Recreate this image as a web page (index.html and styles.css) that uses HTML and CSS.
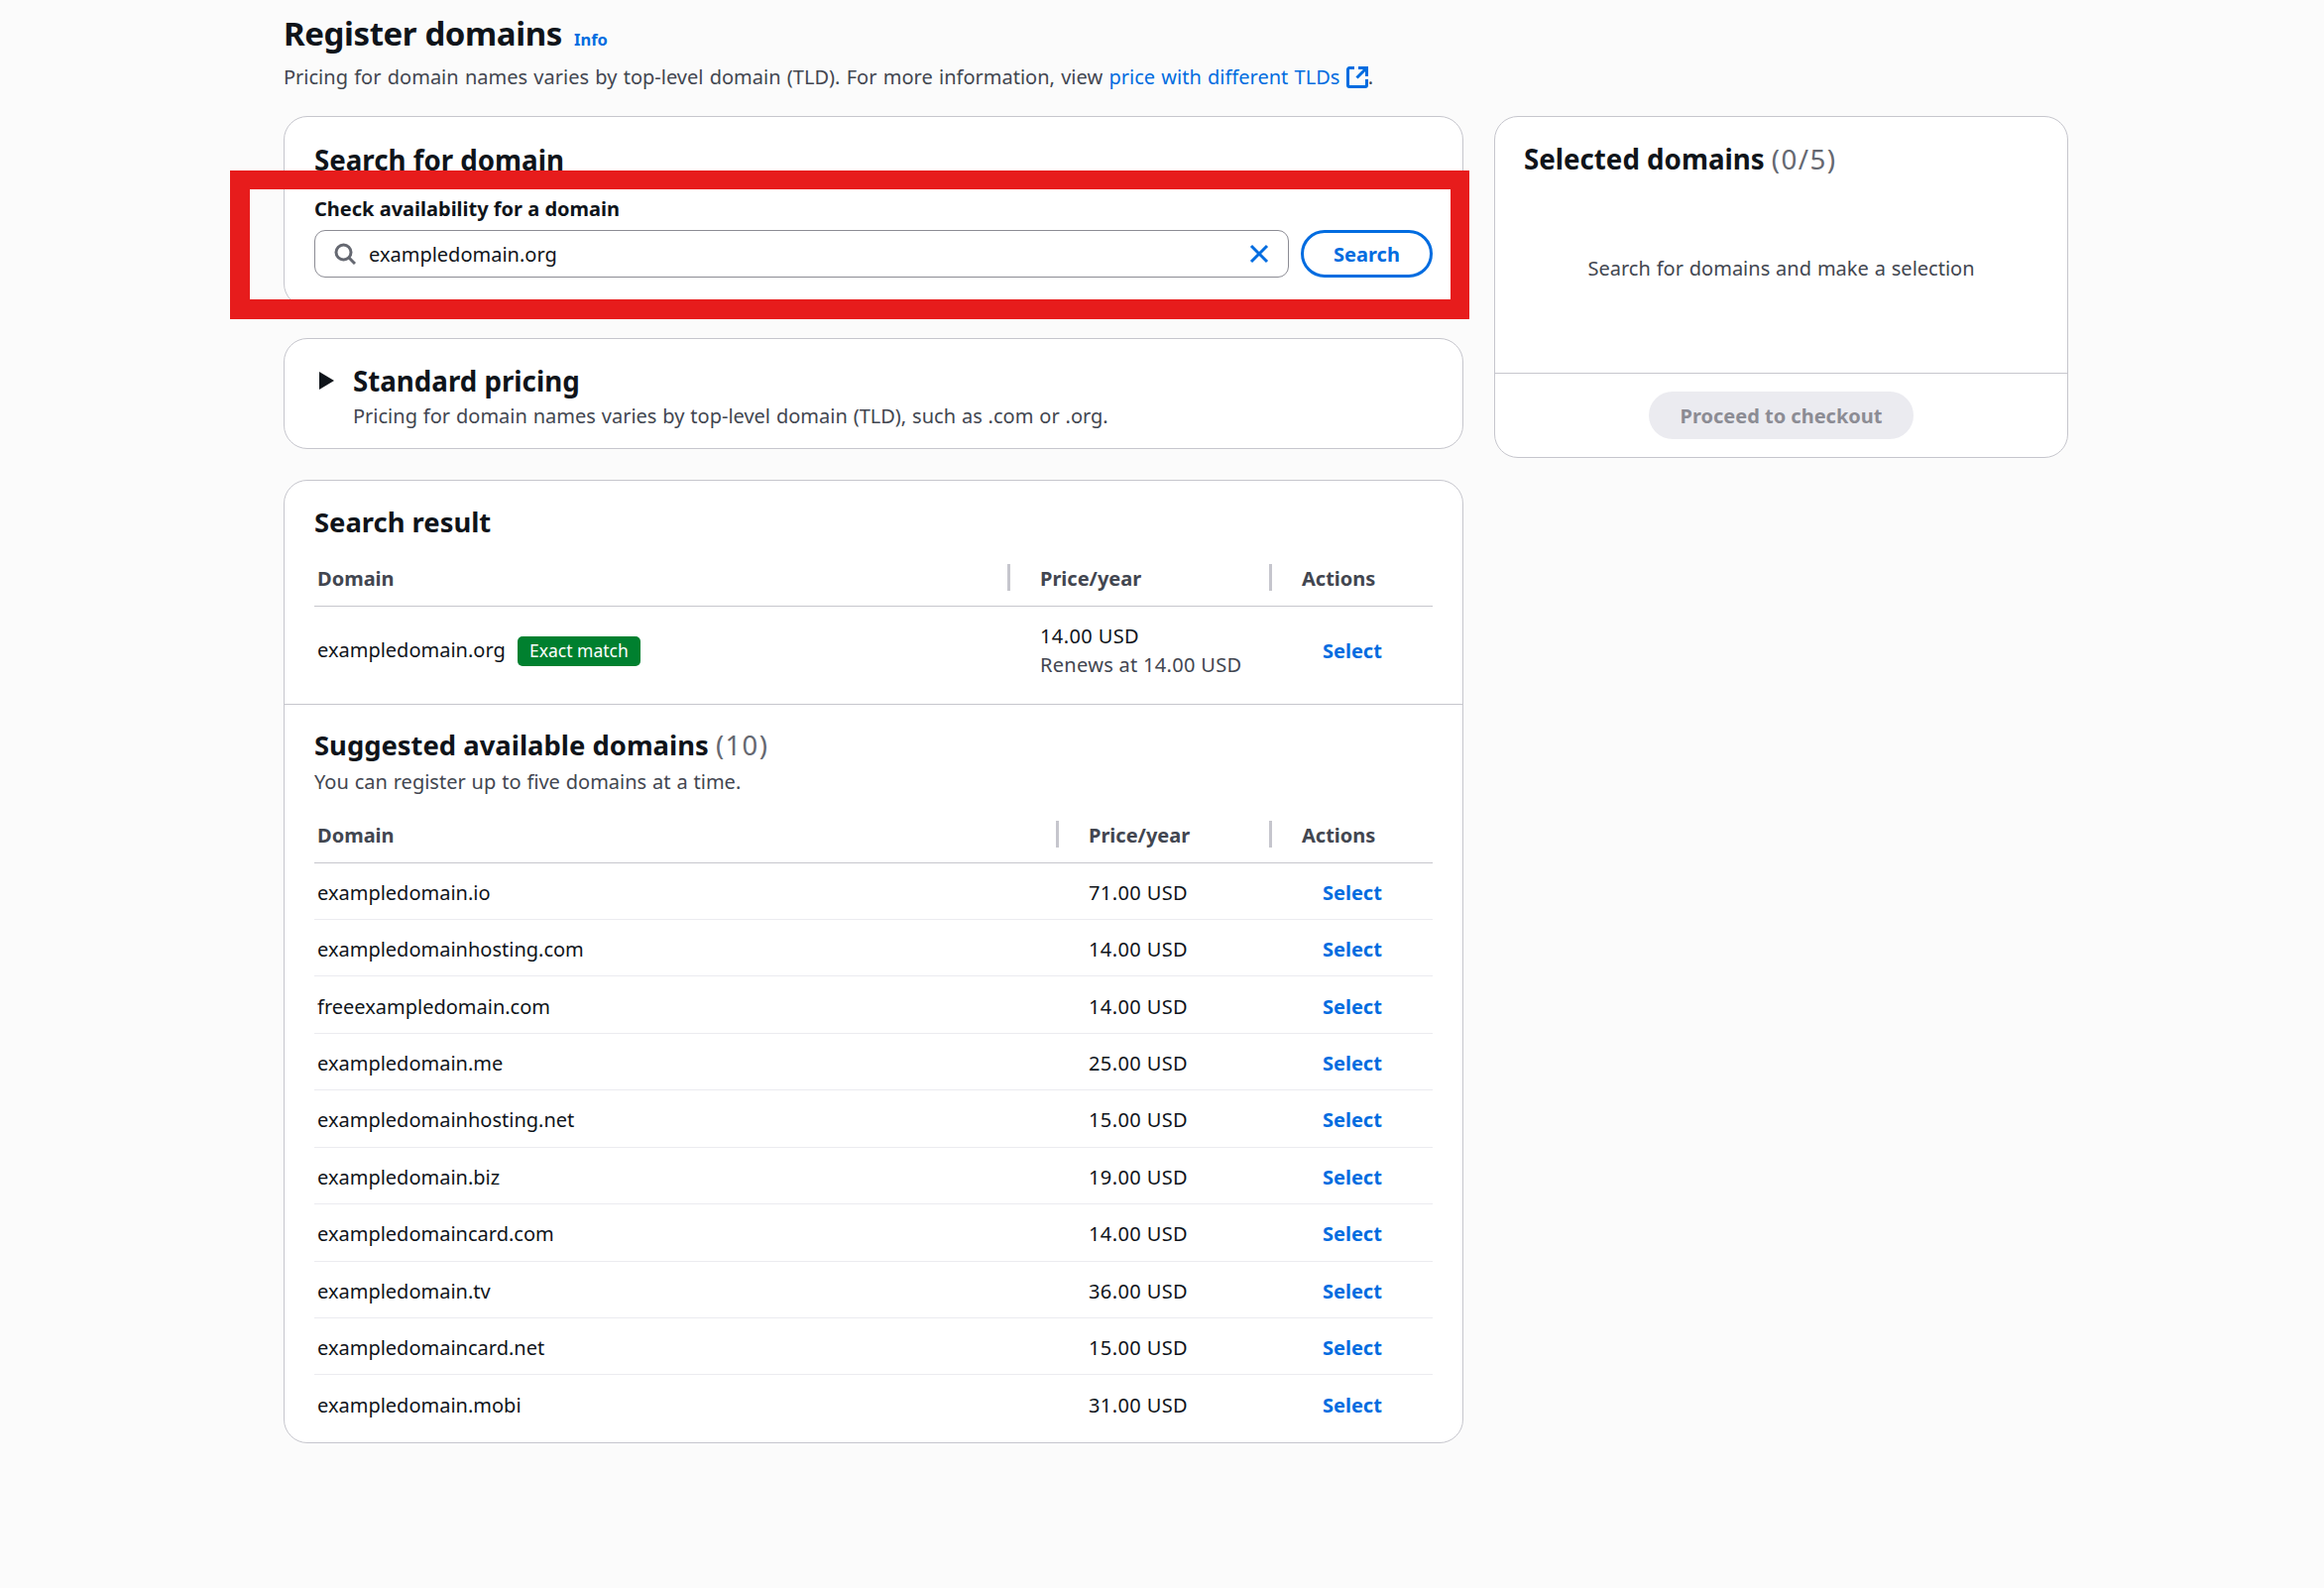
FILE: index.html
```html
<!DOCTYPE html>
<html lang="en">
<head>
  <meta charset="UTF-8">
  <title>Register domains</title>
  <link rel="stylesheet" href="styles.css">
</head>
<body>
  <div class="page">
    <header class="page-header">
      <h1>Register domains <a class="info-link" href="#">Info</a></h1>
      <p>Pricing for domain names varies by top-level domain (TLD). For more information, view <a href="#">price with different TLDs <svg class="external-icon" viewBox="0 0 22 22" width="22" height="22"><path d="M8 1.500H3A1.500 1.500 0 0 0 1.500 3v16A1.500 1.500 0 0 0 3 20.500h16a1.500 1.500 0 0 0 1.500-1.500v-6" /><path d="M12 1.500h8.500V10M20 2l-9.500 9.500" /></svg></a>.</p>
    </header>

    <div class="layout">
      <div class="main-column">
        <section class="card search-card">
          <h2>Search for domain</h2>
          <label class="field-label" for="domainInput">Check availability for a domain</label>
          <div class="search-row">
            <div class="search-input">
              <svg class="search-icon" viewBox="0 0 22 22" width="22" height="22"><circle cx="9.500" cy="9.500" r="7.500" /><path d="M15 15l6 6" /></svg>
              <input id="domainInput" type="text" value="exampledomain.org">
              <svg class="clear-icon" viewBox="0 0 20 20" width="20" height="20"><path d="M2 2l16 16M18 2L2 18" /></svg>
            </div>
            <button class="search-button">Search</button>
          </div>
        </section>

        <section class="card pricing-card">
          <span class="caret"></span>
          <div>
            <h2>Standard pricing</h2>
            <p>Pricing for domain names varies by top-level domain (TLD), such as .com or .org.</p>
          </div>
        </section>

        <section class="card results-card">
          <div class="result-block">
            <h2>Search result</h2>
            <table class="result-table">
              <thead>
                <tr><th>Domain</th><th>Price/year</th><th>Actions</th></tr>
              </thead>
              <tbody>
                <tr>
                  <td>exampledomain.org <span class="badge">Exact match</span></td>
                  <td class="price">14.00 USD<div class="renews">Renews at 14.00 USD</div></td>
                  <td><a class="select-link" href="#">Select</a></td>
                </tr>
              </tbody>
            </table>
          </div>

          <div class="suggest-block">
            <h2>Suggested available domains <span class="count">(10)</span></h2>
            <p>You can register up to five domains at a time.</p>
            <table class="suggest-table">
              <thead>
                <tr><th>Domain</th><th>Price/year</th><th>Actions</th></tr>
              </thead>
              <tbody>
                <tr><td>exampledomain.io</td><td class="price">71.00 USD</td><td><a class="select-link" href="#">Select</a></td></tr>
                <tr><td>exampledomainhosting.com</td><td class="price">14.00 USD</td><td><a class="select-link" href="#">Select</a></td></tr>
                <tr><td>freeexampledomain.com</td><td class="price">14.00 USD</td><td><a class="select-link" href="#">Select</a></td></tr>
                <tr><td>exampledomain.me</td><td class="price">25.00 USD</td><td><a class="select-link" href="#">Select</a></td></tr>
                <tr><td>exampledomainhosting.net</td><td class="price">15.00 USD</td><td><a class="select-link" href="#">Select</a></td></tr>
                <tr><td>exampledomain.biz</td><td class="price">19.00 USD</td><td><a class="select-link" href="#">Select</a></td></tr>
                <tr><td>exampledomaincard.com</td><td class="price">14.00 USD</td><td><a class="select-link" href="#">Select</a></td></tr>
                <tr><td>exampledomain.tv</td><td class="price">36.00 USD</td><td><a class="select-link" href="#">Select</a></td></tr>
                <tr><td>exampledomaincard.net</td><td class="price">15.00 USD</td><td><a class="select-link" href="#">Select</a></td></tr>
                <tr><td>exampledomain.mobi</td><td class="price">31.00 USD</td><td><a class="select-link" href="#">Select</a></td></tr>
              </tbody>
            </table>
          </div>
        </section>
      </div>

      <aside class="card selected-card">
        <h2>Selected domains <span class="count">(0/5)</span></h2>
        <div class="selected-empty">Search for domains and make a selection</div>
        <div class="selected-footer">
          <button class="checkout-button" disabled>Proceed to checkout</button>
        </div>
      </aside>
    </div>

    <div class="highlight-box"></div>
  </div>
</body>
</html>
```

FILE: styles.css
```css
* {
  box-sizing: border-box;
}

body {
  margin: 0;
  background-color: #fbfbfb;
  color: #0f141a;
  font-family: "Noto Sans", sans-serif;
  font-size: 20px;
  line-height: 29px;
}

a {
  color: #006ce0;
  text-decoration: none;
}

h1, h2, p {
  margin: 0;
}

.page {
  position: relative;
  width: 2344px;
  min-height: 1602px;
  padding-left: 286px;
}

.page-header {
  height: 117px;
  padding-top: 12px;
}

h1 {
  font-size: 33px;
  line-height: 44px;
  font-weight: 700;
  letter-spacing: -0.4px;
}

.info-link {
  margin-left: 4px;
  font-size: 16.500px;
  font-weight: 700;
  letter-spacing: 0;
}

.page-header p {
  margin-top: 1px;
  color: #424650;
  word-spacing: 1.100px;
}

.external-icon {
  vertical-align: -4px;
  fill: none;
  stroke: #006ce0;
  stroke-width: 3;
}

.layout {
  display: flex;
  align-items: flex-start;
  gap: 31px;
}

.main-column {
  display: flex;
  flex-direction: column;
  gap: 31px;
  width: 1190px;
}

.card {
  background-color: #fff;
  border: 1px solid #c6c6cd;
  border-radius: 24px;
}

h2 {
  font-size: 27.700px;
  line-height: 38px;
  font-weight: 700;
}

.count {
  color: #656871;
  font-weight: 400;
  letter-spacing: 1.400px;
}

/* search */
.search-card {
  height: 193px;
  padding: 24px 30px 0;
}

.field-label {
  display: block;
  margin-top: 16px;
  font-weight: 700;
}

.search-row {
  display: flex;
  gap: 12px;
  margin-top: 7px;
}

.search-input {
  flex: 1;
  display: flex;
  align-items: center;
  height: 48px;
  padding: 0 19px;
  border: 1px solid #8c8c94;
  border-radius: 11px;
}

.search-icon {
  fill: none;
  stroke: #656871;
  stroke-width: 3;
}

.search-input input {
  flex: 1;
  margin-left: 13px;
  padding: 0;
  border: 0;
  outline: 0;
  font: inherit;
  color: #0f141a;
}

.clear-icon {
  fill: none;
  stroke: #006ce0;
  stroke-width: 3;
}

.search-button {
  width: 133px;
  height: 48px;
  background: #fff;
  border: 3px solid #006ce0;
  border-radius: 24px;
  color: #006ce0;
  font: 700 20px "Noto Sans", sans-serif;
}

/* standard pricing */
.pricing-card {
  display: flex;
  height: 112px;
  padding: 23px 0 0 35px;
}

.caret {
  width: 0;
  height: 0;
  margin: 10px 19px 0 0;
  border-style: solid;
  border-width: 9px 0 9px 15px;
  border-color: transparent transparent transparent #0f141a;
}

.pricing-card p {
  margin-top: 2px;
  color: #424650;
  word-spacing: 0.7px;
}

/* results */
.results-card h2 {
  font-size: 27.400px;
}

.result-block {
  height: 226px;
  padding: 23px 30px 0;
  border-bottom: 1px solid #c6c6cd;
}

.suggest-block {
  padding: 22px 30px 11px;
}

.suggest-block p {
  margin-top: 3px;
  color: #424650;
  word-spacing: 0.7px;
}

table {
  width: 100%;
  border-collapse: collapse;
  table-layout: fixed;
}

th {
  position: relative;
  height: 54px;
  padding: 0 0 0 2px;
  border-bottom: 1px solid #c6c6cd;
  color: #424650;
  text-align: left;
  font-weight: 700;
}

th:not(:first-child)::before {
  content: "";
  position: absolute;
  left: -31px;
  top: 12px;
  width: 3px;
  height: 27px;
  background-color: #c6c6cd;
}

td {
  padding: 0 0 0 2px;
}

th:first-child,
td:first-child {
  padding-left: 3px;
}

.price {
  letter-spacing: 0.4px;
}

.result-table {
  margin-top: 11px;
}

.result-table th:nth-child(1) { width: 730px; }
.result-table th:nth-child(2) { width: 264px; }

.result-table tbody td {
  height: 90px;
}

.renews {
  color: #424650;
  letter-spacing: 0.3px;
}

.badge {
  display: inline-block;
  height: 30px;
  margin-left: 7px;
  padding: 0 12px;
  background-color: #00802f;
  border-radius: 5px;
  color: #fff;
  font-size: 17.500px;
  line-height: 29px;
  vertical-align: 0;
}

.select-link {
  margin-left: 21px;
  font-weight: 700;
}

.suggest-table {
  margin-top: 13px;
}

.suggest-table th:nth-child(1) { width: 779px; }
.suggest-table th:nth-child(2) { width: 215px; }

.suggest-table tbody td {
  height: 57.450px;
  padding-top: 3px;
  border-bottom: 1px solid #ebebf0;
}

.suggest-table tbody tr:last-child td {
  border-bottom: 0;
}

/* selected domains */
.selected-card {
  width: 579px;
  height: 345px;
  padding-top: 23px;
}

.selected-card h2 {
  padding-left: 29px;
}

.selected-empty {
  height: 198px;
  padding-top: 77px;
  border-bottom: 1px solid #c6c6cd;
  color: #424650;
  text-align: center;
  word-spacing: 0.7px;
}

.selected-footer {
  display: flex;
  justify-content: center;
  padding-top: 18px;
}

.checkout-button {
  width: 267px;
  height: 48px;
  background-color: #ebebf0;
  border: 0;
  border-radius: 24px;
  color: #8c8c94;
  font: 700 20px "Noto Sans", sans-serif;
}

/* annotation drawn on top of the screenshot */
.highlight-box {
  position: absolute;
  left: 232px;
  top: 172px;
  width: 1250px;
  height: 150px;
  border: 19px solid #e71c1c;
  border-left-width: 20px;
  border-bottom-width: 20px;
}
```
